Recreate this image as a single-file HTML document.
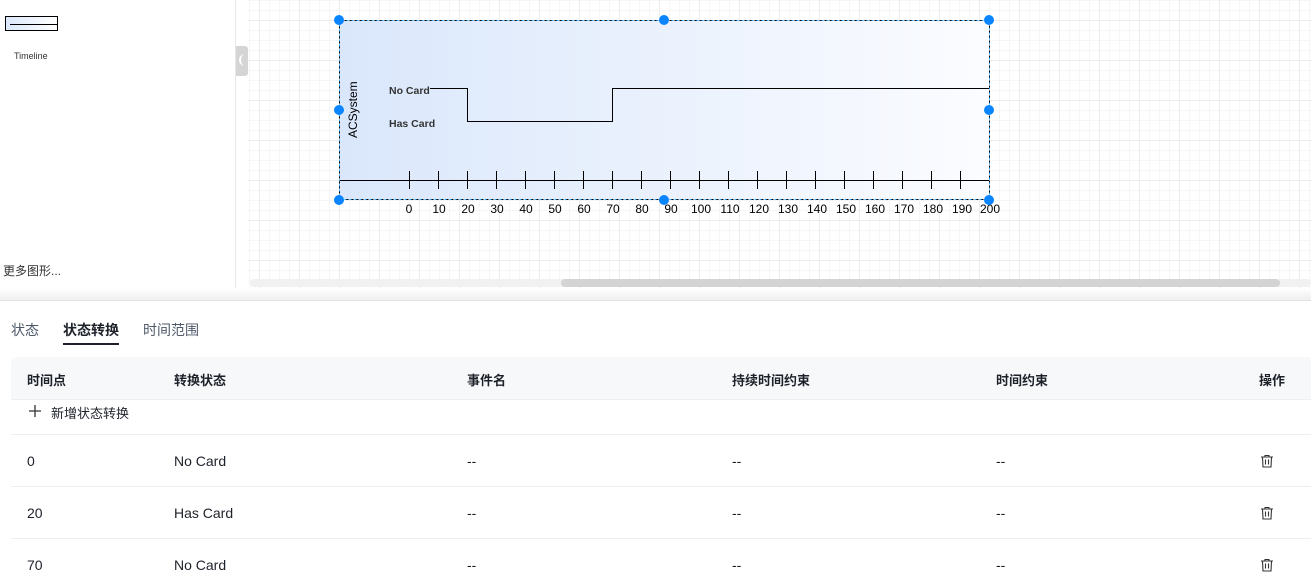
<!DOCTYPE html>
<html><head><meta charset="utf-8"><style>
*{margin:0;padding:0;box-sizing:border-box}
body{width:1311px;height:587px;overflow:hidden;background:#fff;font-family:"Liberation Sans","Noto Sans CJK SC",sans-serif;position:relative}
.left{position:absolute;left:0;top:0;width:236px;height:288px;border-right:1px solid #e8e8e8;background:#fff}
.canvas{position:absolute;left:248px;top:0;width:1063px;height:288px;
background-color:#fff;
background-image:linear-gradient(#ececec 1px,transparent 1px),linear-gradient(90deg,#ececec 1px,transparent 1px),linear-gradient(#f6f6f6 1px,transparent 1px),linear-gradient(90deg,#f6f6f6 1px,transparent 1px);
background-size:40px 40px,40px 40px,10px 10px,10px 10px;background-position:0 20px,11px 0,0 0,1px 0}
.tab{position:absolute;left:236px;top:46px;width:12px;height:30px;background:#d5d5d5;border-radius:0 3px 3px 0}
.shade{position:absolute;left:0;top:288px;width:1311px;height:13px;background:linear-gradient(#fff,#efefef);border-bottom:1px solid #e3e3e3}
.sb{position:absolute;left:250px;top:279px;width:1061px;height:8px;background:#f1f1f1;border-radius:4px}
.thumb{position:absolute;left:561px;top:279px;width:719px;height:8px;background:#d4d4d4;border-radius:4px}
.t{position:absolute;font-size:14px;color:#1d2129;white-space:nowrap}
.h{position:absolute;font-size:13px;font-weight:bold;color:#1d2129;white-space:nowrap}
.line{position:absolute;left:11px;width:1300px;height:1px;background:#eeeff1}
</style></head><body>
<div class="left">
<div style="position:absolute;left:5px;top:16px;width:53px;height:15px;border:1px solid #000;background:linear-gradient(90deg,#dbe8fb,#fff)"><div style="position:absolute;left:4px;right:0;top:7px;height:1px;background:#000"></div></div>
<div style="position:absolute;left:14px;top:51px;font-size:9px;color:#333">Timeline</div>
<div style="position:absolute;left:3px;top:262px;font-size:12px;color:#333">更多图形...</div>
</div>
<div class="canvas"></div>
<div class="tab"><div style="position:absolute;left:3px;top:8px;width:6px;height:12px;border-left:2px solid #fff;border-radius:6px 0 0 6px"></div></div>
<div class="sb"></div><div class="thumb"></div>
<svg style="position:absolute;left:0;top:0" width="1311" height="290" font-family="Liberation Sans, sans-serif">
<defs><linearGradient id="g" x1="0" x2="1"><stop offset="0" stop-color="#dae7fb"/><stop offset="1" stop-color="#fbfcff"/></linearGradient></defs>
<rect x="339.5" y="20.5" width="650" height="179" fill="url(#g)" stroke="#000" stroke-dasharray="3 2"/>
<rect x="339.5" y="20.5" width="650" height="179" fill="none" stroke="#29a3ff" stroke-dasharray="2 3" stroke-dashoffset="3"/>
<text transform="translate(357,138) rotate(-90)" font-size="12">ACSystem</text>
<text x="389" y="94" font-size="10.5" font-weight="bold" fill="#333">No Card</text>
<text x="389" y="127" font-size="10.5" font-weight="bold" fill="#333">Has Card</text>
<path d="M430 88.5H467.5V121.5H612.5V88.5H989" fill="none" stroke="#000"/>
<path d="M340 180.5H989" stroke="#000"/>
<g stroke="#000">
<path d="M409.5 171v18M438.5 171v18M467.5 171v18M496.5 171v18M525.5 171v18M554.5 171v18M583.5 171v18M612.5 171v18M641.5 171v18M670.5 171v18M699.5 171v18M728.5 171v18M757.5 171v18M786.5 171v18M815.5 171v18M844.5 171v18M873.5 171v18M902.5 171v18M931.5 171v18M960.5 171v18"/>
</g>
<g font-size="12" text-anchor="middle" fill="#000">
<text x="409" y="213">0</text><text x="439" y="213">10</text><text x="468" y="213">20</text><text x="497" y="213">30</text><text x="526" y="213">40</text><text x="555" y="213">50</text><text x="584" y="213">60</text><text x="613" y="213">70</text><text x="642" y="213">80</text><text x="671" y="213">90</text><text x="701" y="213">100</text><text x="730" y="213">110</text><text x="759" y="213">120</text><text x="788" y="213">130</text><text x="817" y="213">140</text><text x="846" y="213">150</text><text x="875" y="213">160</text><text x="904" y="213">170</text><text x="933" y="213">180</text><text x="962" y="213">190</text><text x="990" y="213">200</text>
</g>
<g fill="#0a84ff">
<circle cx="339" cy="20" r="5"/><circle cx="664" cy="20" r="5"/><circle cx="989" cy="20" r="5"/>
<circle cx="339" cy="110" r="5"/><circle cx="989" cy="110" r="5"/>
<circle cx="339" cy="200" r="5"/><circle cx="664" cy="200" r="5"/><circle cx="989" cy="200" r="5"/>
</g>
</svg>
<div class="shade"></div>
<div class="t" style="left:11px;top:320px;color:#4e5969">状态</div>
<div class="t" style="left:63px;top:320px;font-weight:bold">状态转换</div>
<div style="position:absolute;left:63px;top:343px;width:56px;height:2px;background:#1d2129"></div>
<div class="t" style="left:143px;top:320px;color:#4e5969">时间范围</div>
<div style="position:absolute;left:11px;top:357px;width:1300px;height:42px;background:#f7f8fa;border-radius:6px 0 0 0"></div>
<div class="h" style="left:27px;top:370px">时间点</div>
<div class="h" style="left:174px;top:370px">转换状态</div>
<div class="h" style="left:467px;top:370px">事件名</div>
<div class="h" style="left:732px;top:370px">持续时间约束</div>
<div class="h" style="left:996px;top:370px">时间约束</div>
<div class="h" style="left:1259px;top:370px">操作</div>
<div class="line" style="top:399px"></div>
<svg style="position:absolute;left:28px;top:404px" width="14" height="14" viewBox="0 0 14 14" stroke="#333" stroke-width="1.3"><path d="M1 7h12M7 1v12"/></svg>
<div class="t" style="left:51px;top:403px;font-size:13px">新增状态转换</div>
<div class="line" style="top:434px"></div>
<div class="line" style="top:486px"></div>
<div class="line" style="top:538px"></div>
<div class="t" style="left:27px;top:453px">0</div><div class="t" style="left:174px;top:453px">No Card</div>
<div class="t" style="left:467px;top:453px">--</div><div class="t" style="left:732px;top:453px">--</div><div class="t" style="left:996px;top:453px">--</div>
<div class="t" style="left:27px;top:505px">20</div><div class="t" style="left:174px;top:505px">Has Card</div>
<div class="t" style="left:467px;top:505px">--</div><div class="t" style="left:732px;top:505px">--</div><div class="t" style="left:996px;top:505px">--</div>
<div class="t" style="left:27px;top:557px">70</div><div class="t" style="left:174px;top:557px">No Card</div>
<div class="t" style="left:467px;top:557px">--</div><div class="t" style="left:732px;top:557px">--</div><div class="t" style="left:996px;top:557px">--</div>
<svg style="position:absolute;left:1259px;top:453px" width="16" height="16" viewBox="0 0 16 16" fill="none" stroke="#333" stroke-width="1.1"><path d="M2 4h12M6 4V2.5h4V4M3.5 4l.5 10h8l.5-10M6.5 6.5v5M9.5 6.5v5"/></svg>
<svg style="position:absolute;left:1259px;top:505px" width="16" height="16" viewBox="0 0 16 16" fill="none" stroke="#333" stroke-width="1.1"><path d="M2 4h12M6 4V2.5h4V4M3.5 4l.5 10h8l.5-10M6.5 6.5v5M9.5 6.5v5"/></svg>
<svg style="position:absolute;left:1259px;top:557px" width="16" height="16" viewBox="0 0 16 16" fill="none" stroke="#333" stroke-width="1.1"><path d="M2 4h12M6 4V2.5h4V4M3.5 4l.5 10h8l.5-10M6.5 6.5v5M9.5 6.5v5"/></svg>
</body></html>
